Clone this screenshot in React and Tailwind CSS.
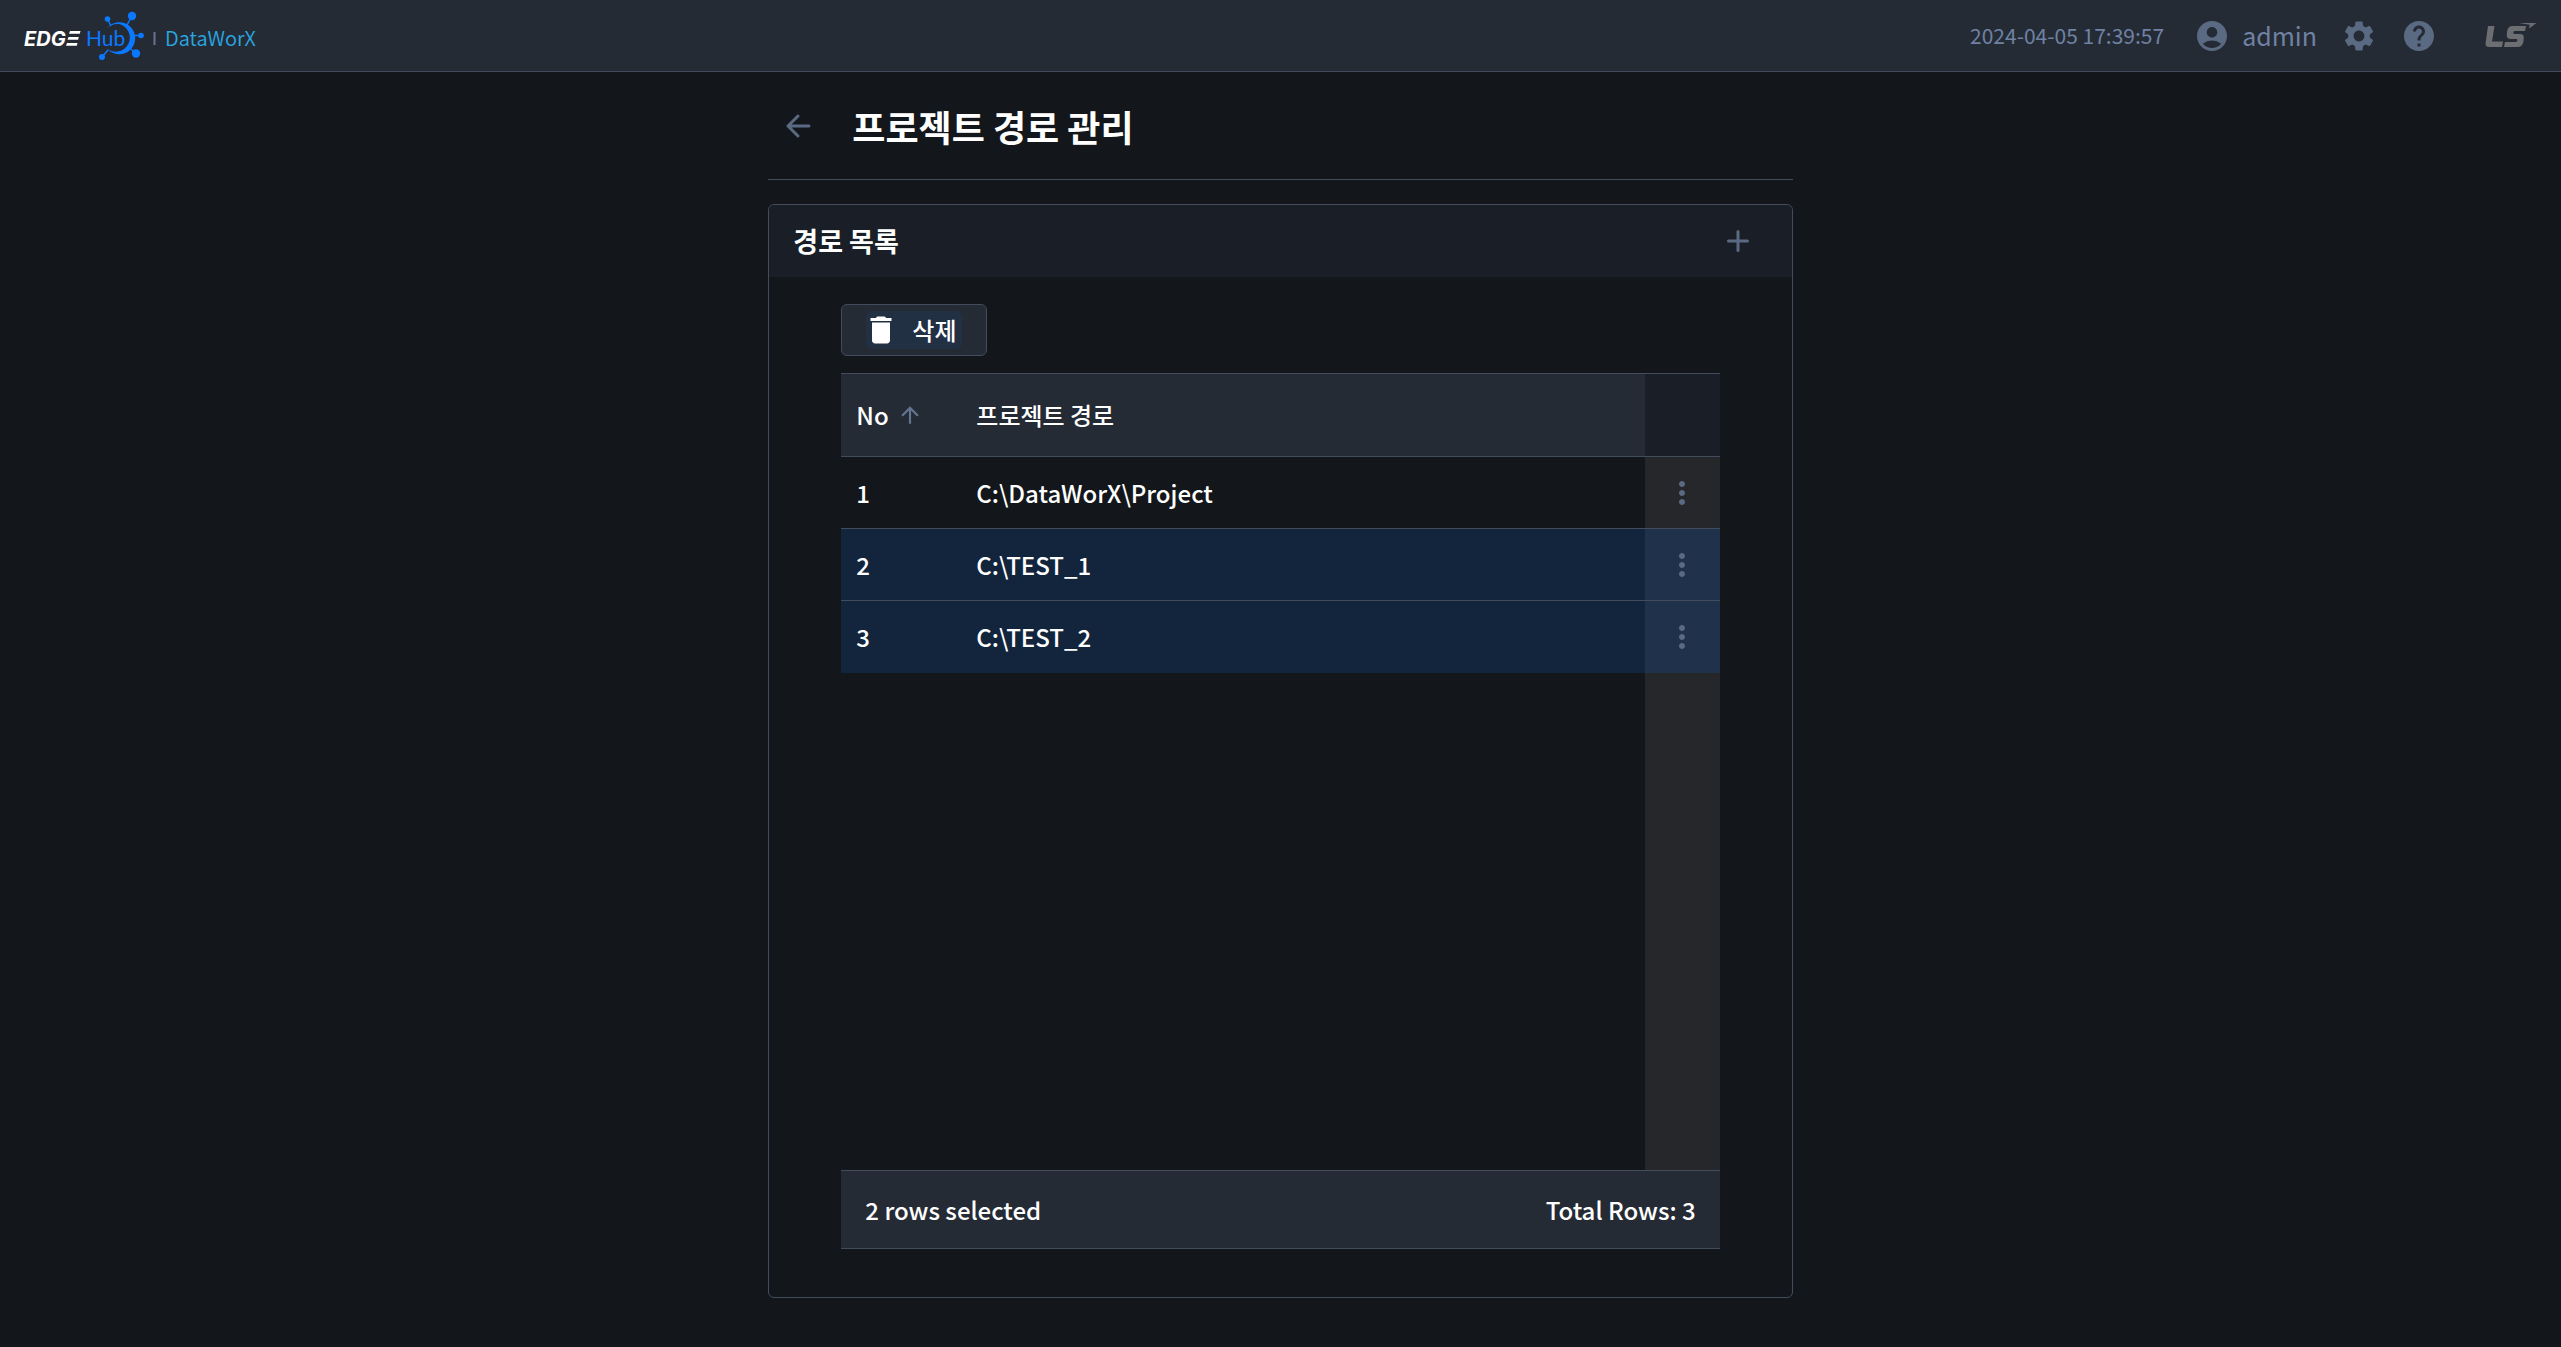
import { useState } from "react";
import { MdAccountCircle, MdSettings, MdHelp, MdMoreVert, MdDelete, MdArrowUpward } from "react-icons/md";

const rows = [
  { no: 1, path: "C:\\DataWorX\\Project" },
  { no: 2, path: "C:\\TEST_1" },
  { no: 3, path: "C:\\TEST_2" },
];

function Brand() {
  return (
    <a href="#" aria-label="EDGE Hub DataWorX" className="block">
      <svg width="250" height="52" viewBox="20 10 250 52" role="img">
        <g fill="#fff">
          <text x="24" y="45.500" fontFamily="Inter, sans-serif" fontSize="20" fontWeight="700" fontStyle="italic">EDG</text>
          <path d="M70 31h10.500l-.7 2.700H69zM68.500 37h10.300l-.7 2.700H67.500zM67 43h10.500l-.7 2.700H66z" />
        </g>
        <text x="86" y="46" fill="#0a78ff" fontFamily="Lato, sans-serif" fontSize="21">Hub</text>
        <g stroke="#0a78ff" strokeWidth="1.500">
          <path d="M107.500 19l3.500 7M132 16l-5 9M141 35.500h-7M136 54l-5-5M102 57l6-7" />
        </g>
        <g fill="#0a78ff">
          <circle cx="107.500" cy="19" r="2.800" />
          <circle cx="132" cy="16" r="4.200" />
          <circle cx="141" cy="35.500" r="2.800" />
          <circle cx="136" cy="53.500" r="4.200" />
          <circle cx="102" cy="57" r="3" />
          <path d="M106.500 28.500A16 16 0 1 1 107 48.500A14 14 0 1 0 119 24A16 16 0 0 0 106.500 28.500z" />
        </g>
        <path d="M154.500 32v13" stroke="#64748f" strokeWidth="2" />
        <text x="165" y="46" fill="#29a7e1" fontFamily="'Noto Sans CJK KR', sans-serif" fontSize="20" fontWeight="350">DataWorX</text>
      </svg>
    </a>
  );
}

function LsLogo() {
  return (
    <svg width="52" height="26" viewBox="0 0 52 26" className="text-[#6d6e71]" role="img" aria-label="LS">
      <g fill="currentColor">
        <path d="M3 3h6.500L7 18.500h11l-1 5.500H4Q0 24 .6 20z" />
        <path d="M41 3l-1 5H30q-1.500 0-1.700 1.400T29.500 11H35q4.500 0 3.700 5l-.4 3q-.8 5-5.800 5H19l1-5h11q1.200 0 1.400-1.400T31.500 16H26q-5 0-4.200-5l.4-3q.8-5 5.800-5z" />
        <path d="M34 0h17.500L44 5.500l.7-3.800z" />
      </g>
    </svg>
  );
}

export default function App() {
  const [selected, setSelected] = useState([2, 3]);
  const toggle = (no) => setSelected((s) => (s.includes(no) ? s.filter((n) => n !== no) : [...s, no]));
  return (
    <div className="flex min-h-screen flex-col bg-[#13171b] font-['Noto_Sans_CJK_KR','Noto_Sans',sans-serif] text-white">
      <header className="flex h-18 items-center justify-between border-b border-[#424c5c] bg-[#252b35] px-5">
        <Brand />
        <div className="flex items-center text-[#6f82a3]">
          <time className="text-[21px]">2024-04-05 17:39:57</time>
          <button type="button" className="ml-[30px] flex items-center gap-3 text-[25px]">
            <MdAccountCircle size={36} className="text-[#5a6a82]" />
            admin
          </button>
          <button type="button" aria-label="설정" className="ml-6 text-[#5a6a82]">
            <MdSettings size={36} />
          </button>
          <button type="button" aria-label="도움말" className="ml-6 text-[#5a6a82]">
            <MdHelp size={36} />
          </button>
          <span className="ml-12 mr-1">
            <LsLogo />
          </span>
        </div>
      </header>

      <main className="mx-auto flex w-2/5 flex-col">
        <div className="flex h-27 items-center gap-[38px] border-b border-[#424c5c] px-4">
          <button type="button" aria-label="뒤로" className="text-[#5a6a82]">
            <svg width="30" height="30" viewBox="0 0 30 30" fill="none" stroke="currentColor" strokeWidth="3" strokeLinecap="round" strokeLinejoin="round">
              <path d="M25 15H4M14 5L4 15l10 10" />
            </svg>
          </button>
          <h1 className="text-4xl font-bold">프로젝트 경로 관리</h1>
        </div>

        <section className="mt-6 rounded-md border border-[#424c5c]">
          <div className="flex h-18 items-center justify-between rounded-t-md bg-[#1a1f27] pr-10 pl-6">
            <h2 className="text-[27px] font-bold">경로 목록</h2>
            <button type="button" aria-label="경로 추가" className="text-[#5a6a82]">
              <svg width="28" height="28" viewBox="0 0 28 28" stroke="currentColor" strokeWidth="3" strokeLinecap="round">
                <path d="M14 4.500v19M4.500 14h19" />
              </svg>
            </button>
          </div>

          <div className="px-18 pt-[27px] pb-12">
            <button type="button" className="flex h-13 items-center rounded-md border border-[#424c5c] bg-[#252b35] px-6">
              <span className="flex h-[38px] items-center gap-4 rounded-md bg-[#223044] pr-1.5 text-2xl font-medium">
                <MdDelete size={30} viewBox="2 2 20 20" />
                삭제
              </span>
            </button>

            <div className="mt-[17px] flex h-[876px] flex-col border-b border-[#424c5c]">
              <div className="flex-1 bg-[linear-gradient(to_left,#26272b_75px,transparent_75px)]">
                <table className="w-full table-fixed border-collapse text-left text-2xl font-medium">
                  <colgroup>
                    <col className="w-30" />
                    <col />
                    <col className="w-[75px]" />
                  </colgroup>
                  <thead>
                    <tr className="h-[83px] border-y border-[#424c5c] bg-[#252b35]">
                      <th className="px-[15px] font-medium">
                        <button type="button" className="flex items-center gap-2">
                          No <MdArrowUpward size={26} className="text-[#64748f]" />
                        </button>
                      </th>
                      <th className="px-[15px] font-medium">프로젝트 경로</th>
                      <th className="bg-[#1a1f27]" aria-label="메뉴" />
                    </tr>
                  </thead>
                  <tbody>
                    {rows.map((r) => {
                      const on = selected.includes(r.no);
                      return (
                        <tr
                          key={r.no}
                          onClick={() => toggle(r.no)}
                          className={`h-18 border-t border-[#424c5c] ${on ? "bg-[#12253d]" : "bg-[#13171b]"}`}
                        >
                          <td className="px-[15px]">{r.no}</td>
                          <td className="px-[15px]">{r.path}</td>
                          <td className={on ? "bg-[#20314b]" : "bg-[#26272b]"}>
                            <button type="button" aria-label="행 메뉴" className="mx-auto block text-[#5a6a82]">
                              <MdMoreVert size={36} />
                            </button>
                          </td>
                        </tr>
                      );
                    })}
                  </tbody>
                </table>
              </div>
              <div className="flex h-[78px] items-center justify-between border-t border-[#424c5c] bg-[#252b35] px-6 text-2xl font-medium">
                <span>{selected.length} rows selected</span>
                <span>Total Rows: {rows.length}</span>
              </div>
            </div>
          </div>
        </section>
      </main>
    </div>
  );
}
